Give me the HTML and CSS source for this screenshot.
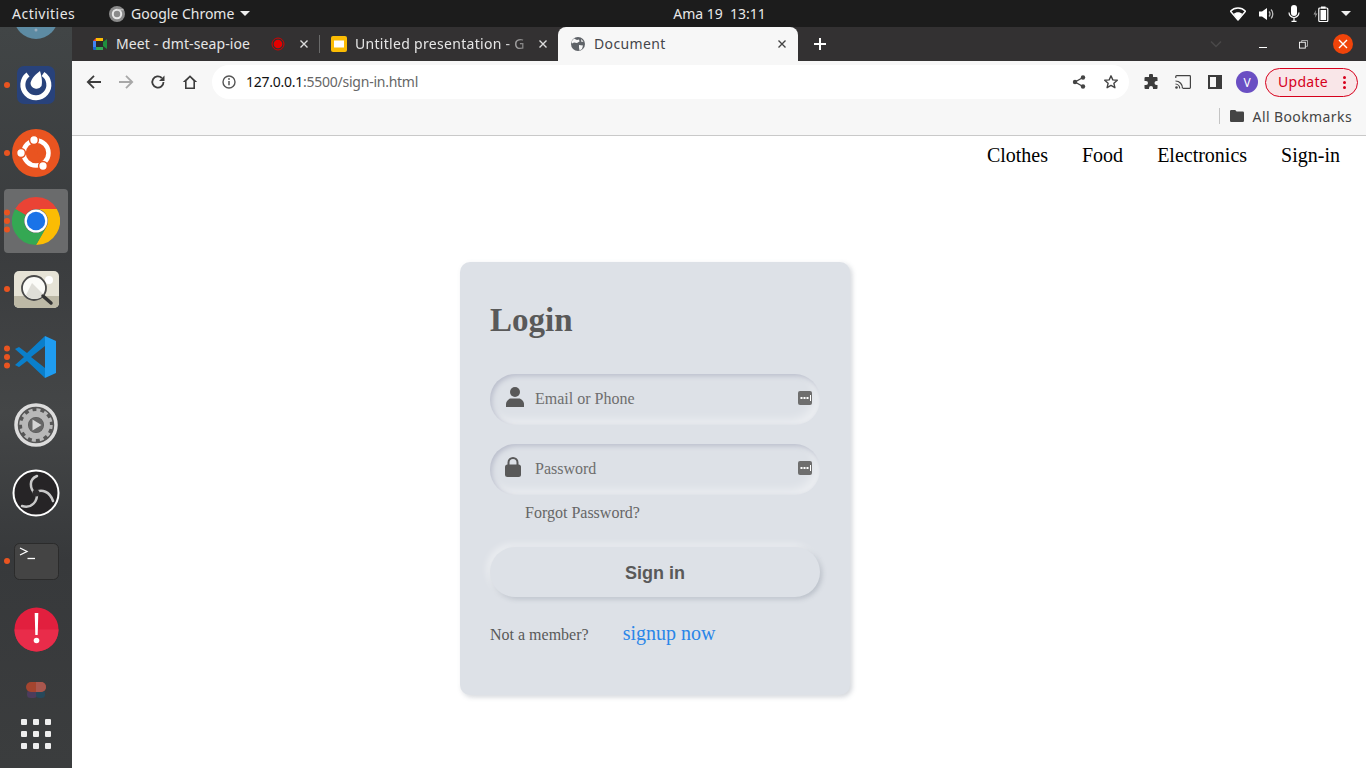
FILE: index.html
```html
<!DOCTYPE html>
<html lang="en">
<head>
  <meta charset="utf-8">
  <meta name="viewport" content="width=device-width,initial-scale=1">
  <title>Document</title>
  <link rel="stylesheet" href="styles.css">
</head>
<body>

<!-- ───────── GNOME top bar ───────── -->
<header class="topbar">
  <div class="topbar-left">
    <span class="activities">Activities</span>
    <span class="appmenu">
      <svg width="16" height="16" viewBox="0 0 16 16"><circle cx="8" cy="8" r="8" fill="#8a8a8a"/><circle cx="8" cy="8" r="4.2" fill="none" stroke="#e8e8e8" stroke-width="2"/><path d="M8 3.8h6.6" stroke="#d0d0d0" stroke-width="1"/></svg>
      <span>Google Chrome</span>
      <i class="caret"></i>
    </span>
  </div>
  <div class="clock">Ama 19&nbsp; 13:11</div>
  <div class="tray">
    <svg width="16" height="14" viewBox="0 0 16 14"><path d="M0.5 4.2C2.5 2.2 5 1 8 1s5.500 1.200 7.500 3.200L8 13z" fill="none" stroke="#fff" stroke-width="1.500" stroke-linejoin="round"/><path d="M3.600 6.800C4.800 5.800 6.300 5.200 8 5.200s3.200.6 4.400 1.600L8 13z" fill="#fff"/></svg>
    <svg width="16" height="14" viewBox="0 0 16 14"><path d="M0 4.500h3L8 1v12L3 9.500H0z" fill="#fff"/><path d="M10 4.500a3.500 3.500 0 0 1 0 5M12 2.500a6.500 6.500 0 0 1 0 9" fill="none" stroke="#bbb" stroke-width="1.300"/></svg>
    <svg width="12" height="17" viewBox="0 0 12 17"><rect x="3" y="0" width="6" height="11" rx="3" fill="#fff"/><path d="M1 7.500a5 5 0 0 0 10 0M6 12.500V16M3.500 16.300h5" fill="none" stroke="#fff" stroke-width="1.200"/></svg>
    <svg width="16" height="16" viewBox="0 0 16 16"><path d="M3 4L0.500 8.500H2.500L1.800 12 4.500 7.500H2.500z" fill="#999"/><rect x="5.800" y="2" width="9" height="13.500" rx="1" fill="none" stroke="#fff" stroke-width="1.200"/><rect x="8" y="0.500" width="4.600" height="2" fill="#fff"/><rect x="7.500" y="4" width="5.600" height="10" fill="#fff"/></svg>
    <i class="caret tray-caret"></i>
  </div>
</header>

<div class="desktop">

  <!-- ───────── Dock ───────── -->
  <aside class="dock">
    <div class="dock-item dock-clipped">
      <svg width="44" height="12" viewBox="0 0 44 12"><circle cx="22" cy="-10" r="22" fill="#5d8ba3"/><circle cx="22" cy="3" r="1.500" fill="#9ab"/></svg>
    </div>

    <div class="dock-item run-1">
      <svg width="38" height="38" viewBox="0 0 38 38"><rect width="38" height="38" rx="7" fill="#28427b"/><path d="M26 8A13 13 0 1 1 11 8.500" fill="none" stroke="#fff" stroke-width="5"/><path d="M23 5C25 12 25.500 16 24.500 20A6 6 0 0 1 13.500 17C14.500 12 19 8 23 5z" fill="#fff"/></svg>
    </div>

    <div class="dock-item run-1">
      <svg width="48" height="48" viewBox="0 0 48 48"><circle cx="24" cy="24" r="24" fill="#e95420"/><circle cx="24" cy="24" r="12.500" fill="none" stroke="#fff" stroke-width="4.500"/><path d="M24 24L22 8M24 24H6M24 24L33 40" stroke="#e95420" stroke-width="2.500"/><g fill="#fff" stroke="#e95420" stroke-width="1.500"><circle cx="22" cy="11" r="4.400"/><circle cx="9" cy="24" r="4.400"/><circle cx="31" cy="37" r="4.400"/></g></svg>
    </div>

    <div class="dock-item dock-active run-3">
      <svg width="48" height="48" viewBox="0 0 48 48"><path d="M24 0A24 24 0 0 1 44.800 12H24A12 12 0 0 0 13.600 18L3.200 12A24 24 0 0 1 24 0z" fill="#ea4335"/><path d="M44.800 12A24 24 0 0 1 24 48L34.400 30A12 12 0 0 0 24 12z" fill="#fbbc04"/><path d="M3.200 12A24 24 0 0 0 24 48L34.400 30A12 12 0 0 1 13.600 18z" fill="#34a853"/><circle cx="24" cy="24" r="11.500" fill="#fff"/><circle cx="24" cy="24" r="9.200" fill="#1a73e8"/></svg>
    </div>

    <div class="dock-item run-1">
      <svg width="45" height="37" viewBox="0 0 45 37"><rect width="45" height="37" rx="5" fill="#e6e3d6"/><path d="M0 25h45v7a5 5 0 0 1-5 5H5a5 5 0 0 1-5-5z" fill="#bdb9a6"/><circle cx="35" cy="9" r="4" fill="#fff"/><circle cx="20" cy="17" r="12" fill="#fbfbf8" stroke="#4a4a4a" stroke-width="1.800"/><path d="M12 24l6-12 12 12a12 12 0 0 1-18 0z" fill="#dfded8"/><path d="M29 25l8 7" stroke="#333" stroke-width="3.500" stroke-linecap="round"/></svg>
    </div>

    <div class="dock-item run-3">
      <svg width="44" height="42" viewBox="0 0 44 42"><path d="M31 0l11 5v32l-11 5z" fill="#1f9cf0"/><path d="M31 0L13 17 5 11 1 13l9 8-9 8 4 2 8-6 18 17 0-10-14-11L31 10z" fill="#0a7fcb"/></svg>
    </div>

    <div class="dock-item">
      <svg width="44" height="44" viewBox="0 0 44 44"><circle cx="22" cy="22" r="20" fill="#565656" stroke="#dcdcdc" stroke-width="3.500"/><circle cx="22" cy="22" r="11" fill="none" stroke="#b8b8b8" stroke-width="6"/><circle cx="22" cy="22" r="15" fill="none" stroke="#b8b8b8" stroke-width="3.500" stroke-dasharray="4 3.850"/><circle cx="22" cy="22" r="7.500" fill="#666"/><path d="M18.500 16.500l9 5.500-9 5.500z" fill="#d4d4d4"/></svg>
    </div>

    <div class="dock-item">
      <svg width="48" height="48" viewBox="0 0 48 48"><circle cx="24" cy="24" r="22.500" fill="#262426" stroke="#fff" stroke-width="2"/><path d="M24 26C17 19 17 10 25 7M22 24C30 19 38 23 41 32M25 23C26 32 20 40 10 37" fill="none" stroke="#c8c8c8" stroke-width="2.500" stroke-linecap="round"/><circle cx="24" cy="24" r="3.500" fill="#2e2c2e"/></svg>
    </div>

    <div class="dock-item run-1">
      <svg width="45" height="37" viewBox="0 0 45 37"><rect x=".5" y=".5" width="44" height="36" rx="5" fill="#444" stroke="#2b2b2b"/><path d="M6 5l7 3.500-7 3.500" fill="none" stroke="#fff" stroke-width="1.300"/><path d="M13.500 15.500h7.500" stroke="#fff" stroke-width="1.300"/></svg>
    </div>

    <div class="dock-item">
      <svg width="45" height="45" viewBox="0 0 45 45"><circle cx="22.500" cy="22.500" r="22" fill="#e21f3e"/><path d="M.5 22.500a22 22 0 0 0 44 0z" fill="#e92c4a"/><path d="M20.700 6h3.600l-.6 22h-2.400z" fill="#fff"/><circle cx="22.500" cy="33.500" r="2.800" fill="#fff"/></svg>
    </div>

    <div class="dock-item dock-short">
      <svg width="20" height="16" viewBox="0 0 20 16"><rect x="1" y="8" width="10" height="8" rx="3.500" fill="#4c3c5c"/><rect x="10" y="8" width="9" height="8" rx="3.500" fill="#27485a"/><rect width="20" height="10" rx="5" fill="#a4452f"/><path d="M10 0h5a5 5 0 0 1 0 10h-5z" fill="#a9574e"/></svg>
    </div>

    <div class="dock-grid">
      <i></i><i></i><i></i><i></i><i></i><i></i><i></i><i></i><i></i>
    </div>
  </aside>

  <!-- ───────── Chrome window ───────── -->
  <div class="window">
    <div class="tabstrip">
      <div class="tab tab-first">
        <svg class="favicon" width="16" height="16" viewBox="0 0 16 16"><path d="M1 5l3-3v3z" fill="#ea4335"/><path d="M4 2h7v3H4z" fill="#fbbc04"/><path d="M1 5h3v6H1z" fill="#4285f4"/><path d="M1 11h3v3H2a1 1 0 0 1-1-1z" fill="#1967d2"/><path d="M4 11h7v3H4z" fill="#34a853"/><path d="M11 6l4-3v10l-4-3z" fill="#1e8e3e"/><rect x="4" y="5" width="7" height="6" fill="#2a2a2a"/></svg>
        <span class="tab-title title-meet">Meet - dmt-seap-ioe</span>
        <svg class="rec" width="14" height="14" viewBox="0 0 14 14"><circle cx="7" cy="7" r="6" fill="none" stroke="#d50000"/><circle cx="7" cy="7" r="4.300" fill="#e60000"/></svg>
        <svg class="tab-x" width="12" height="12" viewBox="0 0 12 12"><path d="M2.500 2.500l7 7M9.500 2.500l-7 7" stroke="#ddd" stroke-width="1.400"/></svg>
      </div>
      <span class="tab-sep"></span>
      <div class="tab tab-second">
        <svg class="favicon" width="16" height="16" viewBox="0 0 16 16"><rect width="16" height="16" rx="2" fill="#fbbc04"/><rect x="3" y="4.500" width="10" height="7" fill="#fff"/></svg>
        <span class="tab-title tab-fade">Untitled presentation - G</span>
        <svg class="tab-x" width="12" height="12" viewBox="0 0 12 12"><path d="M2.500 2.500l7 7M9.500 2.500l-7 7" stroke="#ddd" stroke-width="1.400"/></svg>
      </div>
      <div class="tab tab-active">
        <svg class="favicon" width="16" height="16" viewBox="0 0 16 16"><circle cx="8" cy="8" r="7" fill="#5f6368"/><path d="M4 2.500l3 1.500 2-.5.5 2-2.500 1.500-3-.5-2 1-.5-2zM9 9l4 .5-1 3.500-2.500 1.500-.5-3zM11 3l2.500 2.500-2 .5z" fill="#f7f7f7"/></svg>
        <span class="tab-title title-doc">Document</span>
        <svg class="tab-x" width="12" height="12" viewBox="0 0 12 12"><path d="M2.500 2.500l7 7M9.500 2.500l-7 7" stroke="#444" stroke-width="1.400"/></svg>
      </div>
      <svg class="newtab" width="14" height="14" viewBox="0 0 14 14"><path d="M7 1v12M1 7h12" stroke="#fff" stroke-width="2"/></svg>
      <span class="grow"></span>
      <svg class="tabsearch" width="12" height="8" viewBox="0 0 12 8"><path d="M1 1.500l5 5 5-5" fill="none" stroke="#4a4849" stroke-width="1.500"/></svg>
      <span class="winbtn"><svg width="10" height="10" viewBox="0 0 10 10"><path d="M1 8.500h8" stroke="#fff"/></svg></span>
      <span class="winbtn"><svg width="9" height="9" viewBox="0 0 10 10"><path d="M3 2.500V.5h6.500V7H7.500" fill="none" stroke="#bbb"/><rect x=".5" y="2.500" width="6.500" height="6.500" fill="none" stroke="#fff"/></svg></span>
      <span class="winbtn"><span class="winclose"><svg width="10" height="10" viewBox="0 0 10 10"><path d="M1 1l8 8M9 1l-8 8" stroke="#fff" stroke-width="1.400"/></svg></span></span>
    </div>

    <div class="toolbar">
      <span class="tool"><svg width="16" height="16" viewBox="0 0 16 16"><path d="M15 8H2M8 1.800L1.800 8 8 14.200" fill="none" stroke="#3c3c3c" stroke-width="1.800"/></svg></span>
      <span class="tool"><svg width="16" height="16" viewBox="0 0 16 16"><path d="M1 8h13M8 1.800L14.200 8 8 14.200" fill="none" stroke="#a8a8a8" stroke-width="1.800"/></svg></span>
      <span class="tool"><svg width="16" height="16" viewBox="0 0 16 16"><path d="M13.500 8A5.600 5.600 0 1 1 11.800 4" fill="none" stroke="#3c3c3c" stroke-width="1.800"/><path d="M14.500 1.500v5.500H9z" fill="#3c3c3c"/></svg></span>
      <span class="tool"><svg width="16" height="16" viewBox="0 0 16 16"><path d="M8 1.200L.8 8H3v7h10V8h2.200zM4.600 13.400V7L8 3.600 11.400 7v6.400z" fill="#3c3c3c"/></svg></span>

      <div class="omnibox">
        <svg width="14" height="14" viewBox="0 0 14 14"><circle cx="7" cy="7" r="6" fill="none" stroke="#555" stroke-width="1.400"/><path d="M7 6v4.200" stroke="#555" stroke-width="1.500"/><circle cx="7" cy="4" r=".9" fill="#555"/></svg>
        <span class="url"><b>127.0.0.1</b>:5500/sign-in.html</span>
        <span class="grow"></span>
        <span class="omni-action"><svg width="14" height="14" viewBox="0 0 14 14"><path d="M11 2.500L3 7l8 4.500" fill="none" stroke="#444" stroke-width="1.400"/><circle cx="11" cy="2.500" r="2.200" fill="#444"/><circle cx="3" cy="7" r="2.200" fill="#444"/><circle cx="11" cy="11.500" r="2.200" fill="#444"/></svg></span>
        <span class="omni-action"><svg width="16" height="16" viewBox="0 0 16 16"><path d="M8 1.800l1.800 4.100 4.500.4-3.400 3 1 4.400L8 11.400l-3.900 2.300 1-4.400-3.400-3 4.500-.4z" fill="none" stroke="#444" stroke-width="1.400" stroke-linejoin="round"/></svg></span>
      </div>

      <span class="tool tool-first"><svg width="16" height="16" viewBox="0 0 16 16"><path d="M6 1.500a2 2 0 0 1 4 0V3h3.500a1 1 0 0 1 1 1v3h-1a2 2 0 0 0 0 4h1v3a1 1 0 0 1-1 1H10v-1a2 2 0 0 0-4 0v1H2.500a1 1 0 0 1-1-1v-3H3a2 2 0 0 0 0-4H1.500V4a1 1 0 0 1 1-1H6z" fill="#3c3c3c"/></svg></span>
      <span class="tool"><svg width="16" height="14" viewBox="0 0 16 14"><path d="M.8 3V1.500a.8.8 0 0 1 .8-.8h13a.8.8 0 0 1 .8.8v11a.8.8 0 0 1-.8.8H8" fill="none" stroke="#444" stroke-width="1.200"/><path d="M.5 6a7 7 0 0 1 7 7.500M.5 9a4.500 4.500 0 0 1 4.200 4.500" fill="none" stroke="#444" stroke-width="1.200"/><circle cx="1.500" cy="12.500" r="1.300" fill="#444"/></svg></span>
      <span class="tool"><svg width="14" height="14" viewBox="0 0 14 14"><rect x="1" y="1" width="12" height="12" fill="none" stroke="#3c3c3c" stroke-width="2"/><rect x="8" y="1" width="5" height="12" fill="#3c3c3c"/></svg></span>
      <span class="tool"><span class="avatar">V</span></span>
      <span class="update"><span class="update-label">Update</span><span class="update-dots"><i></i><i></i><i></i></span></span>
    </div>

    <div class="bookmarks">
      <span class="bm-sep"></span>
      <svg width="14" height="12" viewBox="0 0 14 12"><path d="M1.200 0h4l1.400 1.600h6.200A1.200 1.200 0 0 1 14 2.800v8A1.200 1.200 0 0 1 12.800 12H1.200A1.200 1.200 0 0 1 0 10.800V1.200A1.200 1.200 0 0 1 1.200 0z" fill="#444"/></svg>
      <span class="bm-label">All Bookmarks</span>
    </div>

    <!-- ───────── The page itself ───────── -->
    <main class="page">
      <nav class="sitenav">
        <a href="#">Clothes</a>
        <a href="#">Food</a>
        <a href="#">Electronics</a>
        <a href="#">Sign-in</a>
      </nav>

      <section class="card">
        <h1>Login</h1>
        <form>
          <div class="field">
            <svg class="field-icon" width="18" height="20" viewBox="0 0 18 20"><circle cx="9" cy="5" r="5" fill="#595959"/><path d="M0 20v-3c0-3 3-5.500 5-5.500h8c2 0 5 2.500 5 5.500v3z" fill="#595959"/></svg>
            <input type="text" placeholder="Email or Phone">
            <svg class="key" width="14" height="14" viewBox="0 0 14 14"><rect width="14" height="14" rx="2" fill="#6e6e6e"/><g fill="#fff"><rect x="2.500" y="6" width="2" height="2"/><rect x="5.500" y="6" width="2" height="2"/><rect x="8.500" y="6" width="2" height="2"/><rect x="12" y="4" width="1" height="6"/></g></svg>
          </div>
          <div class="field field-pass">
            <svg class="field-icon lock" width="16" height="20" viewBox="0 0 16 20"><path d="M3.500 8V5.500a4.500 4.500 0 0 1 9 0V8" fill="none" stroke="#595959" stroke-width="2"/><rect y="7.500" width="16" height="12.500" rx="2.500" fill="#595959"/></svg>
            <input type="password" placeholder="Password">
            <svg class="key" width="14" height="14" viewBox="0 0 14 14"><rect width="14" height="14" rx="2" fill="#6e6e6e"/><g fill="#fff"><rect x="2.500" y="6" width="2" height="2"/><rect x="5.500" y="6" width="2" height="2"/><rect x="8.500" y="6" width="2" height="2"/><rect x="12" y="4" width="1" height="6"/></g></svg>
          </div>
          <a class="forgot" href="#">Forgot Password?</a>
          <button type="button" class="signin">Sign in</button>
          <p class="member">
            <span>Not a member?</span>
            <a href="#">signup now</a>
          </p>
        </form>
      </section>
    </main>
  </div>
</div>

</body>
</html>
```

FILE: styles.css
```css
:root {font-family: "Noto Sans", sans-serif;}
* {box-sizing: border-box;}
html, body {height: 100%;}
body {margin: 0; width: 1366px; height: 768px; overflow: hidden; background: #fff;}
svg {display: block; flex: none;}
a {text-decoration: none; color: inherit;}
.grow {flex: 1;}

/* top bar */
.topbar {height: 27px; background: #1c1c1c; color: #e8e8e8; font-size: 14px;
         display: grid; grid-template-columns: 1fr auto 1fr; align-items: center;}
.topbar-left {display: flex; align-items: center; padding-left: 12px;}
.activities {width: 97px; letter-spacing: .5px;}
.appmenu {display: flex; align-items: center; gap: 6px;}
.clock {margin-left: 73px;}
.tray {display: flex; align-items: center; justify-content: flex-end; gap: 13px; padding-right: 15px;}
.caret {width: 0; height: 0; border: 5px solid transparent; border-top-color: #eee;
        border-bottom-width: 0; display: block;}
.tray-caret {margin-left: -1px;}

/* dock */
.desktop {display: flex; height: 741px;}
.dock {width: 72px; flex: none; overflow: hidden;
       background: linear-gradient(180deg, #414546 0%, #3a3c3e 30%, #444647 52%, #37393b 72%, #3b3d3e 100%);}
.dock-item {height: 68px; display: flex; align-items: center; justify-content: center; position: relative;}
.dock-clipped {height: 24px; align-items: flex-start;}
.dock-active {margin: 2px 4px; height: 64px; background: #6a6b6c; border-radius: 4px;}
.dock-short {height: 54px;}
.dock-item.run-1::before, .dock-item.run-3::before {content: ""; position: absolute; left: 4px; top: 50%;
       width: 6px; height: 6px; margin-top: -3px; border-radius: 50%; background: #e95420;}
.dock-item.run-3::before {box-shadow: 0 -8.500px 0 #e95420, 0 8.500px 0 #e95420;}
.dock-active.run-3::before {left: 0;}
.dock-grid {display: grid; grid-template-columns: repeat(3, 6px); gap: 6px; justify-content: center; margin-top: 2px;}
.dock-grid i {height: 6px; background: #eee; border-radius: 1px;}

/* chrome */
.window {flex: 1; display: flex; flex-direction: column; min-width: 0;}
.tabstrip {height: 34px; background: #333132; display: flex; align-items: center; padding-left: 8px; color: #e6e6e6; font-size: 14px;}
.tab {height: 34px; display: flex; align-items: center; padding: 0 9px 0 12px;}
.tab-first {width: 239px;}
.tab-sep {width: 1px; height: 18px; background: #6a6a6a;}
.tab-second {width: 238px; padding-left: 11px;}
.tab-active {width: 240px; background: #f7f7f7; color: #45464a; border-radius: 8px 8px 0 0; padding-right: 10px;}
.favicon {margin-right: 8px;}
.tab-title {flex: 1; white-space: nowrap; margin-top: -2px;}
.title-meet {letter-spacing: .1px;}
.title-doc {letter-spacing: .35px;}
.tab-fade {margin-right: 10px; letter-spacing: .3px; -webkit-mask-image: linear-gradient(90deg, #000 86%, #0005 100%); mask-image: linear-gradient(90deg, #000 86%, #0005 100%);}
.rec {margin-right: 13px;}
.newtab {margin-left: 15px;}
.tabsearch {margin-right: 21px;}
.winbtn {width: 40px; height: 34px; display: flex; align-items: center; justify-content: center;}
.winbtn:last-child {margin-right: 3px;}
.winclose {width: 20px; height: 20px; border-radius: 50%; background: #f0440a; display: flex; align-items: center; justify-content: center;}

.toolbar {height: 38px; background: #f7f7f7; display: flex; align-items: center; padding: 0 8px 0 6px;}
.tool {width: 32px; height: 32px; display: flex; align-items: center; justify-content: center;}
.tool-first {margin-left: 6px;}
.omnibox {width: 917px; height: 34px; margin: 4px 0 0 6px; background: #fff; border-radius: 17px;
          display: flex; align-items: center; padding: 0 2px 0 10px; font-size: 14px; color: #666;}
.toolbar .tool, .toolbar .update {margin-top: 4px;}
.url {margin: -2px 0 0 10px; letter-spacing: -.25px;}
.url b {font-weight: 400; color: #111;}
.omni-action {width: 32px; display: flex; justify-content: center;}
.avatar {width: 22px; height: 22px; border-radius: 50%; background: #6a4fc3; color: #fff; font-size: 12px;
         display: flex; align-items: center; justify-content: center;}
.update {width: 93px; height: 29px; margin-left: 2px; border: 1px solid #d6001c; border-radius: 15px; background: #f9e6e8;
         color: #d6001c; font-size: 14px; display: flex; align-items: center; justify-content: space-between; padding: 0 11px 0 12px;}
.update-label {margin-top: -2px; letter-spacing: .3px;}
.update-dots {display: flex; flex-direction: column; gap: 2px;}
.update-dots i {width: 3px; height: 3px; border-radius: 50%; background: #d6001c;}

.bookmarks {height: 37px; background: #f7f7f7; border-bottom: 1px solid #c9c9c9; display: flex; align-items: center;
            justify-content: flex-end; padding: 0 14px 2px 0; color: #444; font-size: 14px;}
.bm-sep {width: 1px; height: 16px; background: #c4c4c4; margin-right: 10px;}
.bm-label {margin-left: 9px; letter-spacing: .4px;}

/* page */
.page {flex: 1; background: #fff; font-family: "Liberation Serif", serif;}
.sitenav {display: flex; justify-content: flex-end; gap: 34px; padding: 7px 26px 0 0; font-size: 20px; color: #000; line-height: 24px;}
.card {width: 390px; height: 433px; margin: 95px 0 0 388px; padding: 30px; border-radius: 10px; background: #dde1e7;
       box-shadow: -3px -3px 7px #ffffff73, 2px 2px 5px rgba(94,104,121,.288); color: #595959;}
.card h1 {margin: 8px 0 0; font-size: 33px; line-height: 40px; font-weight: 700;}
.field {height: 51px; margin-top: 34px; border-radius: 25px; display: flex; align-items: center; padding: 0 8px 0 16px;
        box-shadow: inset 2px 2px 5px #babecc, inset -5px -5px 10px #ffffff73;}
.field-pass {margin-top: 19px;}
.field-icon {margin: -6px 9px 0 0; width: 18px;}
.field-icon.lock {width: 16px; margin: -6px 12px 0 -1px;}
.key {margin-top: -3px;}
.field input {flex: 1; min-width: 0; height: 100%; padding: 0 2px 1px; border: 0; outline: 0; background: none; font: 16px "Liberation Serif", serif; color: #595959;}
.field input::placeholder {color: #6e6e6e; opacity: 1;}
.forgot {display: block; margin: 8px 0 0 35px; font-size: 16px; line-height: 20px; color: #666;}
.signin {display: block; width: 330px; height: 50px; margin-top: 24px; padding: 2px 0 0; border: 0; border-radius: 25px; background: #dde1e7;
         font: 700 18px "Liberation Sans", sans-serif; color: #595959;
         box-shadow: -3px -3px 7px #ffffff73, 2px 2px 5px rgba(94,104,121,.288);}
.member {margin: 23px 0 0; display: flex; align-items: baseline; gap: 34px; font-size: 16px; line-height: 26px;}
.member a {font-size: 20px; color: #2a86e8;}
```
